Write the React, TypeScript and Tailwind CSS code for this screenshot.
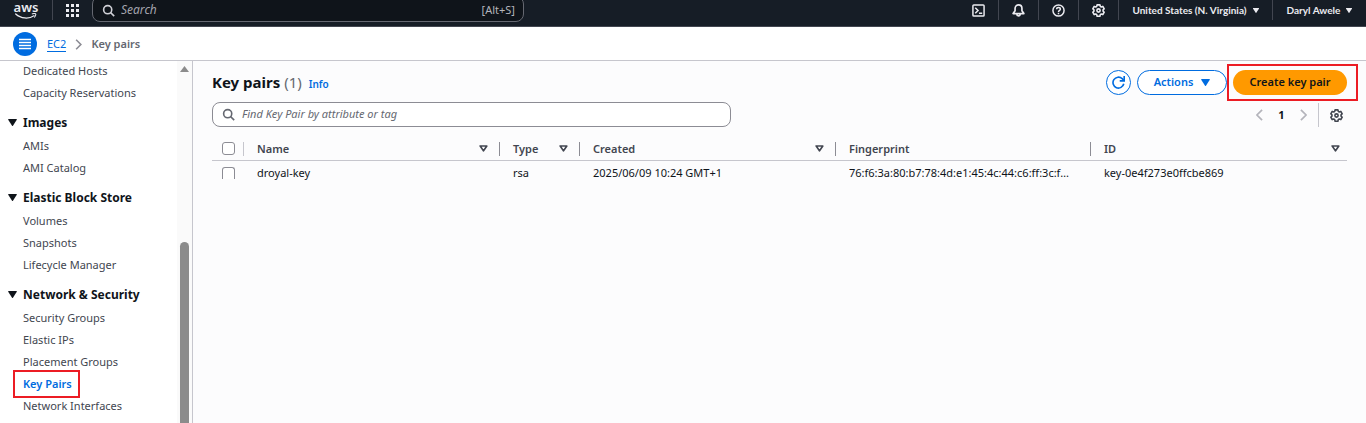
import type { ReactNode } from "react";

const sections = [
  { title: "", items: ["Dedicated Hosts", "Capacity Reservations"] },
  { title: "Images", items: ["AMIs", "AMI Catalog"] },
  { title: "Elastic Block Store", items: ["Volumes", "Snapshots", "Lifecycle Manager"] },
  {
    title: "Network & Security",
    items: ["Security Groups", "Elastic IPs", "Placement Groups", "Key Pairs", "Network Interfaces"],
  },
];

const columns = [
  { label: "Name", sortable: true },
  { label: "Type", sortable: true },
  { label: "Created", sortable: true },
  { label: "Fingerprint", sortable: false },
  { label: "ID", sortable: true },
];

const rows = [
  ["droyal-key", "rsa", "2025/06/09 10:24 GMT+1", "76:f6:3a:80:b7:78:4d:e1:45:4c:44:c6:ff:3c:f…", "key-0e4f273e0ffcbe869"],
];

function Caret({ className }: { className: string }) {
  return (
    <svg viewBox="0 0 10 8" className={className} fill="currentColor" aria-hidden="true">
      <path d="M.6 0h8.8c.5 0 .7.5.5.9L5.5 7.6a.6.6 0 0 1-1 0L.1.9C-.1.5.1 0 .6 0z" />
    </svg>
  );
}

function SearchIcon({ className }: { className: string }) {
  return (
    <svg viewBox="0 0 16 16" className={className} fill="none" stroke="currentColor" strokeWidth="2" aria-hidden="true">
      <circle cx="7" cy="7" r="5" />
      <path d="m15 15-4.5-4.5" />
    </svg>
  );
}

function GearIcon({ className }: { className: string }) {
  return (
    <svg viewBox="0 0 16 16" className={className} fill="none" stroke="currentColor" strokeWidth="2" strokeLinejoin="round" aria-hidden="true">
      <path d="M6.3 1h3.4l.5 1.9 1.2.7 1.9-.6L15 5.9l-1.4 1.4v1.4L15 10.1 13.3 13l-1.9-.6-1.2.7-.5 1.9H6.3l-.5-1.9-1.2-.7-1.9.6L1 10.1l1.4-1.4V7.3L1 5.9 2.7 3l1.9.6 1.2-.7z" />
      <circle cx="8" cy="8" r="2" />
    </svg>
  );
}

function Chevron({ className, left = false }: { className: string; left?: boolean }) {
  return (
    <svg viewBox="0 0 8 14" className={className} fill="none" stroke="currentColor" strokeWidth="2" aria-hidden="true">
      <path d={left ? "M7 1 1 7l6 6" : "m1 1 6 6-6 6"} />
    </svg>
  );
}

function HeaderItem({ label, children }: { label: string; children: ReactNode }) {
  return (
    <button aria-label={label} className="flex h-5 w-10 items-center justify-center border-r border-[#424650]">
      {children}
    </button>
  );
}

function TopBar() {
  return (
    <header className="flex h-[27px] shrink-0 items-start border-b border-[#424650] bg-[#161d26] text-[#ebebf0]">
      <div className="flex h-5 w-[53px] shrink-0 justify-center border-r border-[#424650]">
        <a href="#home" aria-label="aws home" className="flex flex-col items-center">
          <span className="text-[13px] leading-3.5 font-semibold">aws</span>
          <svg viewBox="0 0 26 7" className="-mt-px h-1.5 w-[26px]" fill="none" stroke="currentColor" strokeWidth="1.5" strokeLinecap="round">
            <path d="M1 1.2C7 6.8 16.500 7.200 22.300 3.200" />
            <path d="M20.300 1c1.600-.5 3.400-.6 3.900-.1.500.7-.1 2.500-1.200 3.900" strokeWidth="1.2" />
          </svg>
        </a>
      </div>
      <button aria-label="Services" className="flex h-[21px] w-[39px] shrink-0 items-center justify-center">
        <svg viewBox="0 0 13 13" className="size-[13px]" fill="currentColor">
          {[0, 5, 10].map((y) => [0, 5, 10].map((x) => <rect key={`${x}-${y}`} x={x} y={y} width="3" height="3" />))}
        </svg>
      </button>
      <label className="-mt-1 flex h-[26px] w-[432px] items-center gap-1.5 rounded-lg border border-[#656871] bg-[#0f141a] pt-0.5 pr-2 pl-[9px] text-[#b4b4bb]">
        <SearchIcon className="size-[13px] shrink-0 text-[#d0d0d6]" />
        <input aria-label="Search" placeholder="Search" className="min-w-0 flex-1 bg-transparent text-xs italic outline-none placeholder:text-[#a4a4ad]" />
        <span className="text-[11px]">[Alt+S]</span>
      </label>
      <div className="ml-auto flex items-center font-['Lato','Noto_Sans',sans-serif] text-[10px] font-bold">
        <HeaderItem label="CloudShell">
          <svg viewBox="0 0 14 14" className="size-[13px]" fill="none" stroke="currentColor" strokeWidth="1.6">
            <rect x="1" y="1" width="12" height="12" rx="1" />
            <path d="m3.500 4 3 3-3 3M7.500 10H11" />
          </svg>
        </HeaderItem>
        <HeaderItem label="Notifications">
          <svg viewBox="0 0 14 14" className="size-[13px]" fill="none" stroke="currentColor" strokeWidth="1.8" strokeLinejoin="round">
            <path d="M7 1C4.700 1 3.300 2.700 3.300 4.800v2.400L1.200 10.300h11.600l-2.100-3.100V4.800C10.700 2.700 9.300 1 7 1z" />
            <path d="M5.200 10.500c0 3 3.600 3 3.600 0" />
          </svg>
        </HeaderItem>
        <HeaderItem label="Support">
          <svg viewBox="0 0 14 14" className="size-[13px]" fill="none" stroke="currentColor" strokeWidth="1.6">
            <circle cx="7" cy="7" r="6" />
            <path d="M5 5.700C5 3.200 9 3.300 9 5.600 9 7 7 6.900 7 8.500M7 9.500V11" />
          </svg>
        </HeaderItem>
        <HeaderItem label="Settings">
          <GearIcon className="size-[13px]" />
        </HeaderItem>
        <button className="flex h-5 w-[154px] items-center justify-center gap-1.5 border-r border-[#424650] whitespace-nowrap">
          United States (N. Virginia)
          <Caret className="h-[5px] w-1.5" />
        </button>
        <button className="flex h-5 w-[93px] items-center justify-center gap-1.5 whitespace-nowrap">
          Daryl Awele
          <Caret className="h-[5px] w-1.5" />
        </button>
      </div>
    </header>
  );
}

function Breadcrumbs() {
  return (
    <div className="flex h-[34px] shrink-0 items-center border-b border-[#c6c6cd] bg-white pl-[13px]">
      <button aria-label="Open navigation" className="flex size-6 items-center justify-center rounded-full bg-[#006ce0] text-white">
        <svg viewBox="0 0 12 12" className="size-3" stroke="currentColor" strokeWidth="1.4">
          <path d="M0 1.500h12M0 4.500h12M0 7.500h12M0 10.500h12" />
        </svg>
      </button>
      <nav aria-label="Breadcrumb" className="flex items-center pt-px pl-2.5 text-[11px]">
        <a href="#ec2" className="border-b border-[#006ce0] leading-[15px] text-[#006ce0]">EC2</a>
        <Chevron className="mx-[9px] h-[11px] w-[7px] text-[#8c8c94]" />
        <span className="font-semibold text-[#656871]">Key pairs</span>
      </nav>
    </div>
  );
}

function Sidebar() {
  return (
    <aside className="flex w-[193px] shrink-0 overflow-hidden border-r border-[#c6c6cd] bg-white">
      <nav aria-label="EC2" className="-mt-px min-w-0 flex-1 text-[11px] text-[#424650]">
        {sections.map((section) => (
          <section key={section.items[0]}>
            {section.title && (
              <h2 className="mt-[7px] flex h-6 items-center gap-1.5 pb-px pl-2 text-xs font-bold text-[#0f141a]">
                <Caret className="h-[7px] w-[9px]" />
                {section.title}
              </h2>
            )}
            <ul>
              {section.items.map((item) => (
                <li key={item} className="flex h-[22px] items-center pl-[23px]">
                  {item === "Key Pairs" ? (
                    <a href="#key-pairs" aria-current="page" className="-ml-2.5 border-2 border-[#ec1c24] py-1 pr-1.5 pl-2 font-semibold text-[#006ce0]">
                      {item}
                    </a>
                  ) : (
                    <a href="#section">{item}</a>
                  )}
                </li>
              ))}
            </ul>
          </section>
        ))}
      </nav>
      <div className="flex w-[15px] flex-col items-center bg-[#fafafa] pt-[5px]">
        <svg viewBox="0 0 9 6" className="h-1.5 w-[9px] shrink-0" fill="#8b8b8b">
          <path d="M4.500 0 9 6H0z" />
        </svg>
        <div className="mt-[170px] w-[9px] flex-1 rounded-t-full bg-[#8b8b8b]" />
      </div>
    </aside>
  );
}

function KeyPairTable() {
  return (
    <table className="mt-[11px] w-full table-fixed text-left text-[11px] text-[#0f141a]">
      <colgroup>
        <col className="w-8" />
        <col className="w-64" />
        <col className="w-20" />
        <col className="w-64" />
        <col className="w-[255px]" />
        <col className="w-64" />
      </colgroup>
      <thead>
        <tr className="h-[22px] border-b border-[#c6c6cd] text-[#424650]">
          <th className="p-0">
            <div className="flex h-3.5 items-center border-r border-[#c6c6cd] pl-2.5">
              <input type="checkbox" aria-label="Select all key pairs" className="size-[13px] appearance-none rounded-[3px] border border-[#8c8c94] bg-white" />
            </div>
          </th>
          {columns.map((column, index) => (
            <th key={column.label} className="p-0 font-semibold">
              <div
                className={`flex h-3.5 items-center justify-between pl-[13px] ${
                  index < columns.length - 1 ? "border-r border-[#8c8c94] pr-[11px]" : "pr-[7px]"
                }`}
              >
                {column.label}
                {column.sortable && (
                  <button aria-label={`Sort by ${column.label}`}>
                    <svg viewBox="0 0 9 7" className="h-[7px] w-[9px]" fill="none" stroke="currentColor" strokeWidth="1.7" strokeLinejoin="round">
                      <path d="M1.200 1h6.600L4.500 5.900z" />
                    </svg>
                  </button>
                )}
              </div>
            </th>
          ))}
        </tr>
      </thead>
      <tbody>
        {rows.map((row) => (
          <tr key={row[0]} className="h-[25px]">
            <td className="p-0 pl-2.5">
              <input type="checkbox" aria-label={`Select ${row[0]}`} className="block h-3 w-[13px] appearance-none rounded-t-[3px] border border-b-0 border-[#8c8c94] bg-white" />
            </td>
            {row.map((cell) => (
              <td key={cell} className="p-0 pl-[13px] whitespace-nowrap">{cell}</td>
            ))}
          </tr>
        ))}
      </tbody>
    </table>
  );
}

export default function App() {
  return (
    <div className="flex h-screen flex-col overflow-hidden bg-white font-['Noto_Sans',sans-serif]">
      <TopBar />
      <Breadcrumbs />
      <div className="flex min-h-0 flex-1">
        <Sidebar />
        <main className="min-w-0 flex-1 bg-[#fcfcfd] px-[19px] pt-2">
          <div className="flex h-[27px] items-center">
            <div className="flex items-baseline gap-[7px]">
              <h1 className="text-[15px] font-bold text-[#0f141a]">
                Key pairs <span className="font-normal text-[#656871]">(1)</span>
              </h1>
              <a href="#info" className="text-[10px] font-semibold text-[#006ce0]">Info</a>
            </div>
            <div className="ml-auto flex items-center gap-1.5 text-[11px] font-semibold">
              <button aria-label="Refresh" className="flex size-[25px] items-center justify-center rounded-full border border-[#006ce0] bg-white text-[#006ce0]">
                <svg viewBox="0 0 16 16" className="size-[13px]" fill="none" stroke="currentColor" strokeWidth="2">
                  <path d="M14.500 9.500A6.700 6.700 0 1 1 12.500 3.200L14.500 5.300" />
                  <path d="M15 0V6H9.500" />
                </svg>
              </button>
              <button className="flex h-[25px] w-[90px] items-center justify-center gap-2 rounded-full border border-[#006ce0] bg-white text-[#006ce0]">
                Actions
                <Caret className="h-[7px] w-[9px]" />
              </button>
              <div className="relative">
                <button className="h-[25px] w-[114px] rounded-full bg-[#ff9900] text-[#0f141a]">Create key pair</button>
                <span className="pointer-events-none absolute -inset-y-1.5 -right-[11px] -left-1.5 border-2 border-[#ec1c24]" />
              </div>
            </div>
          </div>
          <div className="mt-1.5 flex items-center">
            <label className="flex h-[25px] w-[519px] items-center gap-[7px] rounded-lg border border-[#8c8c94] bg-white px-[9px]">
              <SearchIcon className="size-[13px] shrink-0 text-[#656871]" />
              <input aria-label="Find key pair" placeholder="Find Key Pair by attribute or tag" className="min-w-0 flex-1 bg-transparent text-[11px] italic outline-none placeholder:text-[#656871]" />
            </label>
            <div className="ml-auto flex h-6 items-center pt-px text-[11px] font-bold text-[#0f141a]">
              <button aria-label="Previous page" className="text-[#b4b4bb]">
                <Chevron left className="h-3 w-[7px]" />
              </button>
              <span className="w-[37px] text-center">1</span>
              <button aria-label="Next page" className="text-[#b4b4bb]">
                <Chevron className="h-3 w-[7px]" />
              </button>
              <button aria-label="Preferences" className="ml-[11px] flex h-6 items-center border-l border-[#c6c6cd] pr-1 pl-[11px] text-[#424650]">
                <GearIcon className="size-[13px]" />
              </button>
            </div>
          </div>
          <KeyPairTable />
        </main>
      </div>
    </div>
  );
}
